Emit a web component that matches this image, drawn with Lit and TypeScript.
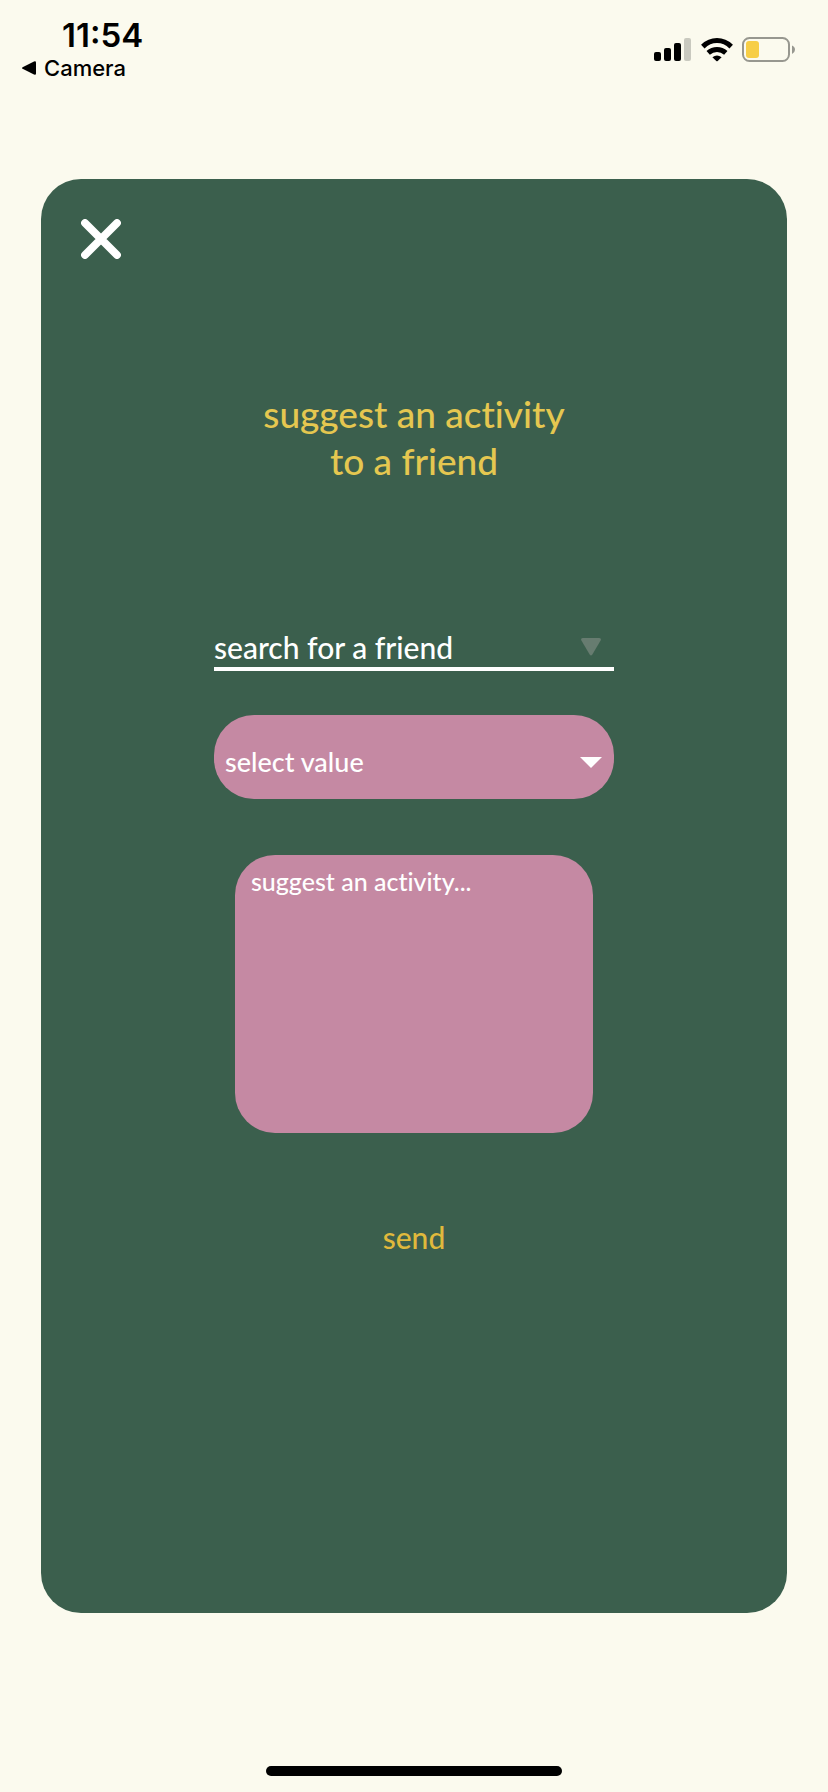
import { LitElement, html, css } from "lit";
import { customElement } from "lit/decorators.js";

@customElement("status-bar")
class StatusBar extends LitElement {
  static styles = css`
    :host {
      display: flex;
      justify-content: space-between;
      align-items: flex-start;
      box-sizing: border-box;
      padding: 16px 32px 0 22px;
      color: #000;
      font-family: Inter, "Liberation Sans", sans-serif;
    }
    .left {
      display: flex;
      flex-direction: column;
    }
    .time {
      padding-left: 40px;
      font-size: 33px;
      line-height: 38px;
      font-weight: 600;
    }
    .back {
      display: flex;
      align-items: center;
      gap: 8px;
      color: inherit;
      text-decoration: none;
      font-size: 22px;
      line-height: 28px;
      font-weight: 500;
    }
    .icons {
      display: flex;
      align-items: center;
      gap: 9px;
      padding-top: 21px;
    }
    svg {
      display: block;
    }
  `;

  render() {
    return html`
      <div class="left">
        <div class="time">11:54</div>
        <a class="back" href="#camera">
          <svg width="14" height="14" viewBox="0 0 14 14" aria-hidden="true">
            <path d="M0.6 6.2 12 0.4Q14 -0.2 14 1.6V12.4Q14 14.2 12 13.6L0.6 7.8Q-0.6 7 0.6 6.2Z" />
          </svg>
          Camera
        </a>
      </div>
      <div class="icons">
        <svg width="38" height="24" viewBox="0 0 38 24" role="img" aria-label="Signal">
          <rect x="0" y="14" width="7" height="9" rx="2" />
          <rect x="10" y="10" width="7" height="13" rx="2" />
          <rect x="20" y="5" width="7" height="18" rx="2" />
          <rect x="30" y="0" width="7" height="23" rx="2" fill="#c9c9bf" />
        </svg>
        <svg width="32" height="24" viewBox="0 0 32 24" role="img" aria-label="Wi-Fi">
          <g fill="none" stroke="#000" stroke-width="5">
            <path d="M1.8 8.6Q8 2.6 16 2.6T30.2 8.6" />
            <path d="M7.2 14.8Q11 11.4 16 11.4T24.8 14.8" />
          </g>
          <path d="M11.4 19.2Q16 15.6 20.6 19.2L16.7 23Q16 23.6 15.3 23Z" />
        </svg>
        <svg width="54" height="26" viewBox="0 0 54 26" role="img" aria-label="Battery">
          <rect x="1" y="1" width="46" height="23" rx="6.5" fill="none" stroke="#97978f" stroke-width="2" />
          <rect x="4" y="4" width="13" height="17" rx="3" fill="#f7ce46" />
          <path d="M50 8.5Q53 9.8 53 12.7T50 17Z" fill="#97978f" />
        </svg>
      </div>
    `;
  }
}

@customElement("suggest-card")
class SuggestCard extends LitElement {
  static styles = css`
    :host {
      display: flex;
      flex-direction: column;
      box-sizing: border-box;
      padding: 40px;
      border-radius: 40px;
      background: #3b5f4d;
      color: #fff;
      font-family: Lato, "Open Sans", sans-serif;
      font-weight: 500;
      font-variant-ligatures: none;
    }
    button,
    input,
    select,
    textarea {
      box-sizing: border-box;
      margin: 0;
      padding: 0;
      border: 0;
      background: none;
      color: inherit;
      font: inherit;
      font-variant-ligatures: none;
      appearance: none;
    }
    svg {
      display: block;
    }
    .close {
      align-self: flex-start;
      cursor: pointer;
    }
    h1 {
      margin: 131px 0 0;
      color: #e5c750;
      font-size: 37px;
      line-height: 47px;
      font-weight: 500;
      text-align: center;
    }
    form {
      display: flex;
      flex-direction: column;
      align-items: center;
      margin-top: 141px;
    }
    .search,
    .pick {
      width: 100%;
      max-width: 400px;
    }
    .search {
      display: flex;
      align-items: center;
      box-sizing: border-box;
      padding-right: 13px;
      border-bottom: 4px solid #fff;
    }
    .search input {
      flex: 1;
      min-width: 0;
      height: 42px;
      padding-top: 2px;
      font-size: 30px;
    }
    .search svg {
      margin-top: 2px;
    }
    ::placeholder {
      color: #fff;
      opacity: 1;
    }
    .pick {
      display: grid;
      align-items: center;
      margin-top: 44px;
      border-radius: 40px;
      background: #c589a3;
    }
    .pick select,
    .pick svg {
      grid-area: 1 / 1;
    }
    .pick select {
      width: 100%;
      height: 84px;
      padding: 8px 48px 0 11px;
      font-size: 27px;
    }
    .pick svg {
      justify-self: end;
      margin: 10px 12px 0 0;
      pointer-events: none;
    }
    textarea {
      width: 100%;
      max-width: 358px;
      height: 278px;
      margin-top: 56px;
      padding: 11px 16px;
      border-radius: 40px;
      background: #c589a3;
      font-size: 25px;
      line-height: 30px;
      resize: none;
    }
    .send {
      margin-top: 83px;
      color: #e0b93c;
      font-size: 30px;
      line-height: 42px;
      cursor: pointer;
    }
  `;

  render() {
    return html`
      <button class="close" type="button" aria-label="Close">
        <svg width="40" height="40" viewBox="0 0 40 40" aria-hidden="true">
          <path d="M4 4 36 36M36 4 4 36" fill="none" stroke="#fff" stroke-width="7.8" stroke-linecap="round" />
        </svg>
      </button>
      <h1>suggest an activity<br />to a friend</h1>
      <form>
        <label class="search">
          <input type="text" placeholder="search for a friend" aria-label="search for a friend" />
          <svg width="20" height="18" viewBox="0 0 20 18" aria-hidden="true">
            <path d="M1.6 0H18.4Q20.6 0.4 19.6 2.4L11.2 16.8Q10 18.4 8.8 16.8L0.4 2.4Q-0.6 0.4 1.6 0Z" fill="#677c70" />
          </svg>
        </label>
        <label class="pick">
          <select aria-label="select value">
            <option>select value</option>
          </select>
          <svg width="22" height="11" viewBox="0 0 22 11" aria-hidden="true">
            <path d="M0 0H22L11 11Z" fill="#fff" />
          </svg>
        </label>
        <textarea placeholder="suggest an activity..." aria-label="suggest an activity"></textarea>
        <button class="send" type="button">send</button>
      </form>
    `;
  }
}

@customElement("app-root")
class AppRoot extends LitElement {
  static styles = css`
    :host {
      display: flex;
      flex-direction: column;
      box-sizing: border-box;
      min-height: 100vh;
      background: #fbfaee;
    }
    status-bar {
      height: 179px;
    }
    suggest-card {
      flex: 1;
      margin: 0 41px;
    }
    .home {
      display: flex;
      justify-content: center;
      align-items: flex-end;
      box-sizing: border-box;
      height: 179px;
      padding-bottom: 16px;
    }
    .indicator {
      width: 296px;
      height: 10px;
      border-radius: 5px;
      background: #000;
    }
  `;

  render() {
    return html`
      <status-bar></status-bar>
      <suggest-card></suggest-card>
      <div class="home"><div class="indicator"></div></div>
    `;
  }
}
